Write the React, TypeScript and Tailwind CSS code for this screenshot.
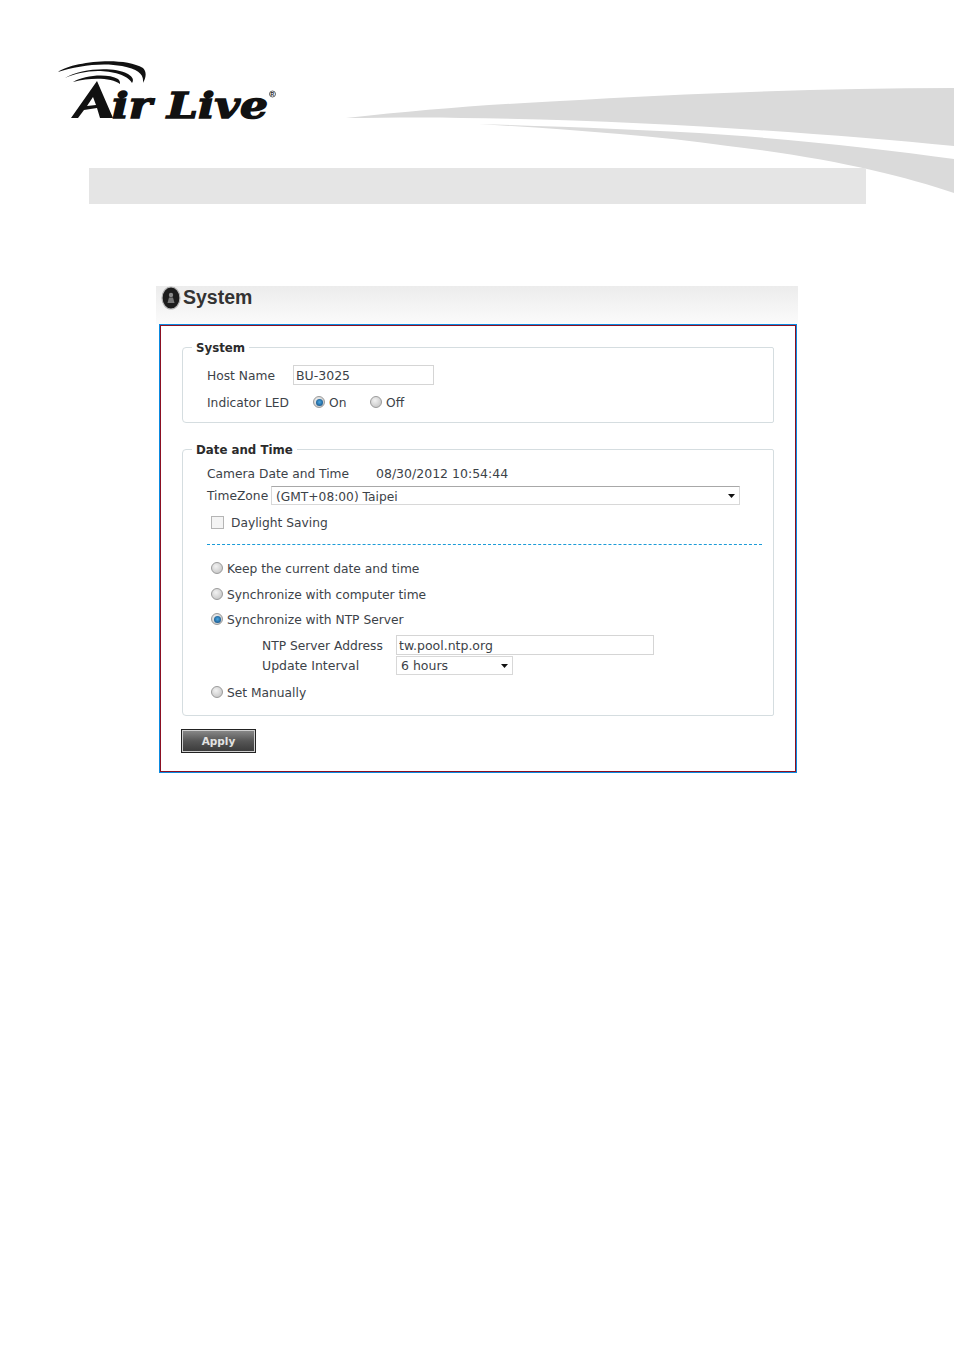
import React from 'react';

const bodyFont = "font-['DejaVu_Sans',sans-serif]";

const Logo = () => (
  <svg width="225" height="72" viewBox="55 60 225 72" className="block">
    <path d="M58 72 C72 62 122 56 143 68 C147 72 146 78 143 83 C144 74 138 69 122 66 C102 62 76 66 58 72 Z" fill="#111" />
    <path d="M65 78 C80 69 112 66 128 74 C133 77 134 80 132 83 C128 75 112 71 98 71 C86 71 74 74 65 78 Z" fill="#111" />
    <path d="M73 82 C84 75 108 73 118 79 C120 81 120 82 120 84 C112 78 92 77 73 82 Z" fill="#111" />
    <path d="M97 81 L113 118 L100 118 L97 108 L84 110 L78 118 L71 118 Z" fill="#111" />
    <path d="M93 97 L96 105 L87 106 Z" fill="#fff" />
    <text x="112" y="118" fontFamily="'DejaVu Serif', serif" fontWeight="900" fontStyle="italic" fontSize="35" textLength="156" lengthAdjust="spacingAndGlyphs" fill="#111" stroke="#111" strokeWidth="1.4">ir Live</text>
    <circle cx="272.5" cy="94" r="3" fill="none" stroke="#222" strokeWidth="0.7" />
    <text x="270.6" y="96" fontFamily="'Liberation Sans', sans-serif" fontSize="5" fontWeight="700" fill="#222">R</text>
  </svg>
);

const Swoosh = () => (
  <svg width="954" height="204" viewBox="0 0 954 204" className="absolute top-0 left-0">
    <path d="M346 118 C420 110 480 105 560 101 C680 94 820 88 954 88 L954 146 C820 133 640 120 461 118 C420 117 380 118 346 118 Z" fill="#dadada" />
    <path d="M479 124 C560 127 640 129 728 135 C810 141 890 150 954 159 L954 193 C900 175 830 158 728 146 C650 135 560 129 479 124 Z" fill="#dadada" />
  </svg>
);

const Radio = ({ checked }: { checked?: boolean }) => (
  <span className="w-[12px] h-[12px] shrink-0 rounded-full border border-[#9a9a9a] bg-[radial-gradient(circle_at_40%_35%,#f2f2f2,#bdbdbd)] flex items-center justify-center">
    {checked && <span className="w-[7px] h-[7px] rounded-full bg-[radial-gradient(circle_at_50%_45%,#4aa8e4,#0a3f70)]" />}
  </span>
);

const Caret = () => (
  <svg width="7" height="4" viewBox="0 0 7 4" className="shrink-0">
    <path d="M0 0 H7 L3.5 4 Z" fill="#111" />
  </svg>
);

// labels sit one pixel under the row centre in the reference
const Txt = ({ className = '', children }: { className?: string; children: React.ReactNode }) => (
  <span className={`pt-[2px] ${className}`}>{children}</span>
);

const RadioRow = ({ label, checked, className }: { label: string; checked?: boolean; className: string }) => (
  <div className={`flex items-center gap-[4px] h-[16px] pl-[4px] ${className}`}>
    <Radio checked={checked} />
    <Txt>{label}</Txt>
  </div>
);

const Legend = ({ children }: { children: React.ReactNode }) => (
  <legend className="ml-[9px] px-[4px] h-[15px] leading-[17px] text-[11.8px] font-bold text-[#2b2b2b]">{children}</legend>
);

export default function App() {
  return (
    <div className="relative w-[954px] h-[1350px] bg-white overflow-hidden">
      <Swoosh />
      <div className="relative h-[168px] pl-[55px] pt-[60px]">
        <Logo />
      </div>
      <div className="relative ml-[89px] w-[777px] h-[36px] bg-[#e5e5e5]" />

      <div className={`relative ml-[156px] mt-[82px] w-[642px] ${bodyFont} text-[12.25px] text-[#3c4248]`}>
        <div className="h-[38px] bg-gradient-to-b from-[#ececec] to-[#fbfbfb] flex items-start pl-[5px]">
          <svg width="20" height="24" viewBox="0 0 20 24" className="shrink-0">
            <ellipse cx="10" cy="12" rx="9" ry="11" fill="#1c1c1c" stroke="#b5b5b5" strokeWidth="1.2" />
            <circle cx="10" cy="9" r="2.2" fill="#8a8a8a" />
            <path d="M6.5 17 L8 11.5 H12 L13.5 17 Z" fill="#777" />
          </svg>
          <span className="ml-[2px] font-['Liberation_Sans',sans-serif] font-bold text-[19.5px] leading-[22px] text-[#333]">System</span>
        </div>

        <div className="ml-[3px] w-[638px] h-[449px] border border-[#0b8ae0]">
          <div className="h-full border border-[#8c1022] pl-[21px] pt-[14px]">
            <fieldset className="w-[592px] h-[83px] border border-[#d5dde0] rounded-l-[4px] rounded-r-[2px]">
              <Legend>System</Legend>
              <div className="pl-[24px]">
                <div className="flex items-center h-[20px] mt-[10px]">
                  <Txt className="w-[86px]">Host Name</Txt>
                  <input readOnly defaultValue="BU-3025" className="w-[141px] h-[20px] border border-[#d5d5d5] px-[2px] text-[12.5px] text-[#3c4248] outline-none" />
                </div>
                <div className="flex items-center h-[20px] mt-[7px]">
                  <Txt className="w-[106px]">Indicator LED</Txt>
                  <Radio checked />
                  <Txt className="ml-[4px] w-[41px]">On</Txt>
                  <Radio />
                  <Txt className="ml-[4px]">Off</Txt>
                </div>
              </div>
            </fieldset>

            <fieldset className="w-[592px] h-[274px] mt-[19px] border border-[#d5dde0] rounded-l-[4px] rounded-r-[2px]">
              <Legend>Date and Time</Legend>
              <div className="pl-[24px]">
                <div className="flex items-center h-[18px] mt-[7px]">
                  <Txt className="w-[169px]">Camera Date and Time</Txt>
                  <Txt className="text-[12.5px]">08/30/2012 10:54:44</Txt>
                </div>
                <div className="flex items-center h-[19px] mt-[4px]">
                  <Txt className="w-[64px]">TimeZone</Txt>
                  <div className="w-[469px] h-[19px] flex items-center justify-between pl-[4px] pr-[4px] border border-[#d8d8d8] border-t-[#a8a8a8]">
                    <span className="pt-[3px]">(GMT+08:00) Taipei</span>
                    <Caret />
                  </div>
                </div>
                <div className="flex items-center h-[16px] mt-[9px] pl-[4px]">
                  <span className="w-[13px] h-[13px] border border-[#b5b5b5] bg-[#f4f4f4]" />
                  <Txt className="ml-[7px]">Daylight Saving</Txt>
                </div>
                <div className="w-[555px] mt-[14px] border-t border-dashed border-[#1b9bd8]" />
                <RadioRow className="mt-[15px]" label="Keep the current date and time" />
                <RadioRow className="mt-[10px]" label="Synchronize with computer time" />
                <RadioRow className="mt-[9px]" label="Synchronize with NTP Server" checked />
                <div className="flex items-center h-[20px] mt-[8px] pl-[55px]">
                  <Txt className="w-[134px]">NTP Server Address</Txt>
                  <input readOnly defaultValue="tw.pool.ntp.org" className="w-[258px] h-[20px] border border-[#d5d5d5] px-[2px] text-[12.5px] text-[#3c4248] outline-none" />
                </div>
                <div className="flex items-center h-[19px] mt-[1px] pl-[55px] text-[12.5px]">
                  <Txt className="w-[134px]">Update Interval</Txt>
                  <div className="w-[117px] h-[19px] flex items-center justify-between pl-[4px] pr-[4px] border border-[#d8d8d8]">
                    <Txt>6 hours</Txt>
                    <Caret />
                  </div>
                </div>
                <RadioRow className="mt-[9px]" label="Set Manually" />
              </div>
            </fieldset>

            <button className="block mt-[13px] -ml-[1px] w-[75px] h-[24px] pt-[1px] border border-[#222] bg-gradient-to-b from-[#8c8c8c] via-[#565656] to-[#3a3a3a] shadow-[inset_0_0_0_1px_#cfcfcf] text-[10.5px] font-bold text-[#e2e2e2]">
              Apply
            </button>
          </div>
        </div>
      </div>
    </div>
  );
}
